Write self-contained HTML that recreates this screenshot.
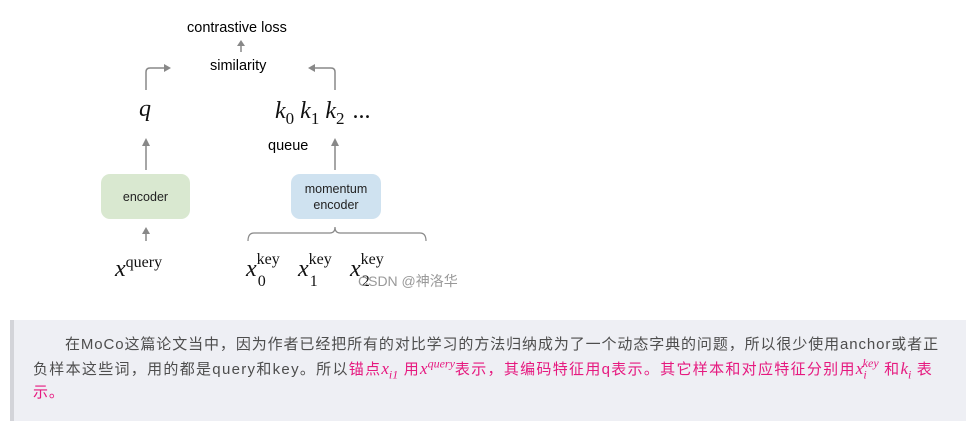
<!DOCTYPE html>
<html><head><meta charset="utf-8"><style>
body{margin:0;width:978px;height:430px;background:#fff;position:relative;overflow:hidden;font-family:"Liberation Sans",sans-serif}
.a{position:absolute;white-space:nowrap}
.m{font-family:"Liberation Serif",serif;font-style:italic;font-size:24px;color:#111}
.r{font-style:normal}
.box{position:absolute;border-radius:9px;font-size:12.5px;color:#222;display:flex;align-items:center;justify-content:center;text-align:center;line-height:16px}
.note{position:absolute;left:10px;top:320px;width:956px;height:101px;background:#eeeff4;border-left:4px solid #d3d4d9;font-family:"Liberation Sans","Noto Sans CJK SC",sans-serif;font-size:15px;color:#4d4d4d;line-height:23.5px;box-sizing:border-box;padding:13px 0 0 19px;white-space:nowrap;letter-spacing:0.9px}
.p{color:#e6197f}
.mi{font-family:"Liberation Serif",serif;font-style:italic;letter-spacing:0;font-size:17px}
.note sub,.note sup{line-height:0;font-size:12px}
.l2{letter-spacing:1.3px}
</style></head><body>
<svg width="978" height="300" style="position:absolute;left:0;top:0" fill="none" stroke="#888" stroke-width="1.5">
<path d="M241 52V42"/><path d="M237 46l4-6 4 6" fill="#888" stroke="none"/>
<path d="M146 90V72q0-4 4-4h18"/><path d="M164 64l7 4-7 4z" fill="#888" stroke="none"/>
<path d="M335 90V72q0-4-4-4h-18"/><path d="M315 64l-7 4 7 4z" fill="#888" stroke="none"/>
<path d="M146 170V144"/><path d="M142 146l4-8 4 8z" fill="#888" stroke="none"/>
<path d="M335 170V144"/><path d="M331 146l4-8 4 8z" fill="#888" stroke="none"/>
<path d="M146 241V232"/><path d="M142 234l4-7 4 7z" fill="#888" stroke="none"/>
<path d="M248 241q0-8 6-8h76q5 0 5-6q0 6 5 6h80q6 0 6 8" stroke-width="1.2"/>
</svg>
<div class="a" style="left:187px;top:20px;font-size:14.5px">contrastive loss</div>
<div class="a" style="left:210px;top:58px;font-size:14.5px">similarity</div>
<div class="a m" style="left:139px;top:96px">q</div>
<div class="a m" style="left:275px;top:98px">k<sub class="r" style="font-size:17px;margin-right:6px">0</sub>k<sub class="r" style="font-size:17px;margin-right:6px">1</sub>k<sub class="r" style="font-size:17px;margin-right:8px">2</sub><span class="r">...</span></div>
<div class="a" style="left:268px;top:138px;font-size:14.5px">queue</div>
<div class="box" style="left:101px;top:174px;width:89px;height:45px;background:#d9e8d0">encoder</div>
<div class="box" style="left:291px;top:174px;width:90px;height:45px;background:#cfe2f0">momentum<br>encoder</div>
<div class="a m" style="left:115px;top:254px">x<sup class="r" style="font-size:16px">query</sup></div>
<div class="a m" style="left:246px;top:254px">x<sup class="r" style="font-size:16px;position:relative;top:-3px">key</sup><span style="position:relative;left:-22px;top:10px;font-size:16px" class="r">0</span></div>
<div class="a m" style="left:298px;top:254px">x<sup class="r" style="font-size:16px;position:relative;top:-3px">key</sup><span style="position:relative;left:-22px;top:10px;font-size:16px" class="r">1</span></div>
<div class="a m" style="left:350px;top:254px">x<sup class="r" style="font-size:16px;position:relative;top:-3px">key</sup><span style="position:relative;left:-22px;top:10px;font-size:16px" class="r">2</span></div>
<div class="a" style="left:358px;top:271px;font-size:14px;color:#999;font-family:'Liberation Sans','Noto Sans CJK SC',sans-serif">CSDN @神洛华</div>
<div class="note"><span style="padding-left:32px"></span>在MoCo这篇论文当中，因为作者已经把所有的对比学习的方法归纳成为了一个动态字典的问题，所以很少使用anchor或者正<br><span class="l2">负样本这些词，用的都是query和key。所以<span class="p">锚点<span class="mi">x<sub>i1</sub></span> 用<span class="mi">x<sup>query</sup></span>表示，其编码特征用q表示。其它样本和对应特征分别用<span class="mi">x<sub>i</sub><sup style="margin-left:-4px">key</sup></span> 和<span class="mi">k<sub>i</sub></span> 表</span></span><br><span class="p">示。</span></div>
</body></html>
